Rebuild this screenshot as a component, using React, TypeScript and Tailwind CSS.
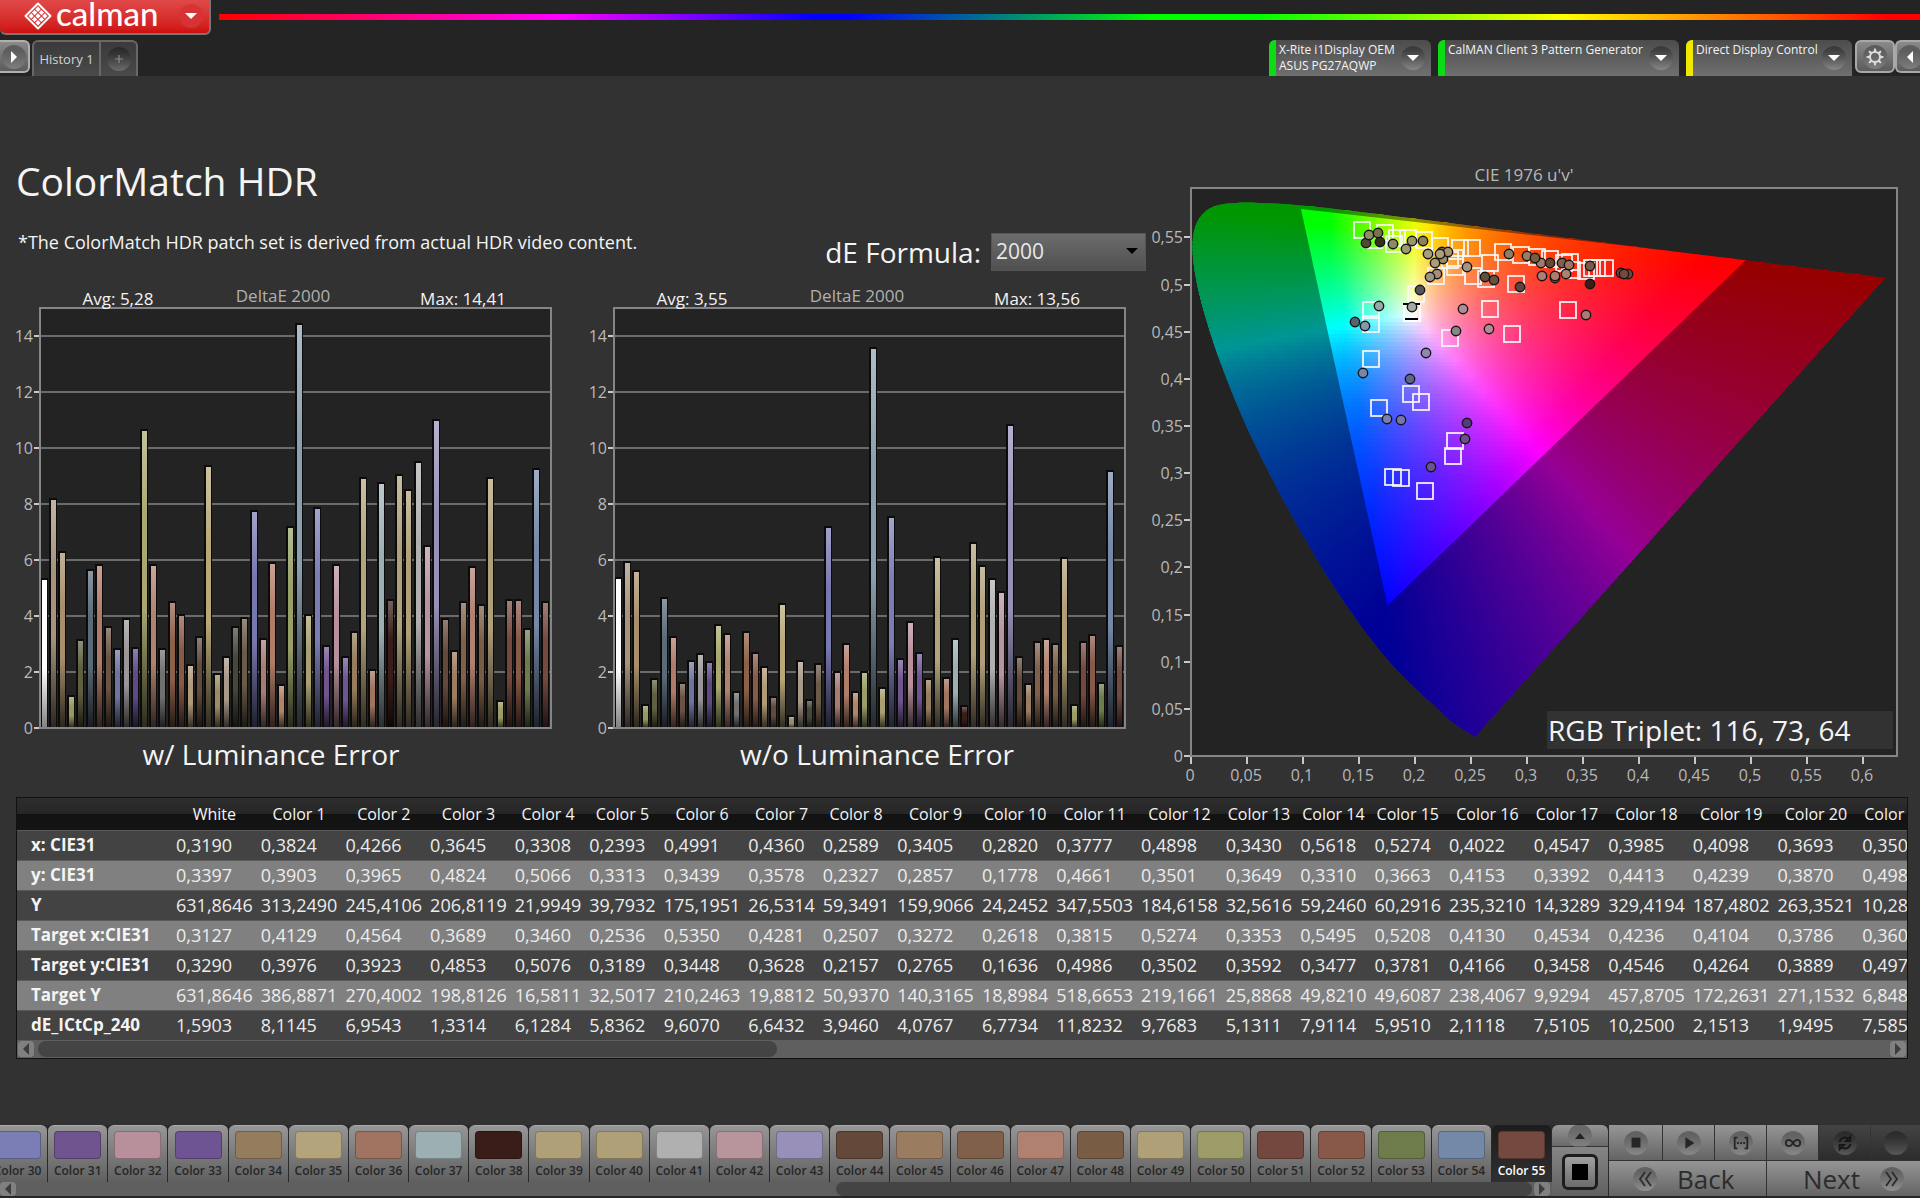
import React from "react";

const PALETTE = [
  "#ffffff", "#a8947c", "#a88f6c", "#9a9860", "#5f6040", "#5a6a78", "#b07a68", "#6a5344",
  "#6f74a0", "#9a9698", "#5f4a88", "#a8a870", "#b08270", "#707070", "#8f6048", "#8a5a48",
  "#b09a78", "#5f4a3c", "#b8a878", "#9a8c64", "#a89888", "#46463a", "#6a5a48", "#7878b0",
  "#a87c74", "#b07c68", "#b08468", "#98a068", "#8aa0b0", "#a8a070", "#7a7eb4", "#6f5490",
  "#b8909c", "#6f5494", "#947c5c", "#b4a47c", "#a07460", "#9cb0b4", "#3a1c18", "#b0a078",
  "#b0a078", "#b0b0b0", "#b8949c", "#9890b8", "#64483a", "#9a7c60", "#80604a", "#b08070",
  "#785c44", "#b0a078", "#9c9c68", "#74483e", "#885848", "#6e7c4c", "#7488a8", "#744940",
];

const WITH_LUMINANCE = [
  5.29, 8.14, 6.24, 1.12, 3.1, 5.62, 5.79, 3.58, 2.78, 3.85, 2.82, 10.62, 5.77, 2.78, 4.47, 4.0,
  2.2, 3.22, 9.33, 1.9, 2.5, 3.58, 3.89, 7.7, 3.15, 5.86, 1.49, 7.15, 14.39, 4.0, 7.81, 2.89,
  5.77, 2.5, 3.39, 8.89, 2.05, 8.72, 4.52, 9.0, 8.48, 9.46, 6.48, 10.95, 3.85, 2.72, 4.47, 5.7,
  4.34, 8.89, 0.93, 4.52, 4.52, 3.51, 9.21, 4.47,
];

const WITHOUT_LUMINANCE = [
  5.31, 5.9, 5.56, 0.79, 1.7, 4.62, 3.21, 1.57, 2.35, 2.59, 2.31, 3.66, 3.32, 1.24, 3.38, 2.65,
  2.16, 1.07, 4.39, 0.4, 2.36, 0.96, 2.26, 7.14, 1.98, 2.98, 1.24, 1.96, 13.55, 1.38, 7.49, 2.42,
  3.75, 2.65, 1.71, 6.08, 1.76, 3.15, 0.74, 6.57, 5.75, 5.29, 4.83, 10.79, 2.49, 1.54, 3.05, 3.15,
  2.95, 6.05, 0.79, 3.05, 3.27, 1.57, 9.15, 2.88,
];

const HEADINGS = ["White", ...Array.from({ length: 21 }, (_, i) => `Color ${i + 1}`)];

const TABLE: { label: string; values: string[] }[] = [
  { label: "x: CIE31", values: "0,3190 0,3824 0,4266 0,3645 0,3308 0,2393 0,4991 0,4360 0,2589 0,3405 0,2820 0,3777 0,4898 0,3430 0,5618 0,5274 0,4022 0,4547 0,3985 0,4098 0,3693 0,3501".split(" ") },
  { label: "y: CIE31", values: "0,3397 0,3903 0,3965 0,4824 0,5066 0,3313 0,3439 0,3578 0,2327 0,2857 0,1778 0,4661 0,3501 0,3649 0,3310 0,3663 0,4153 0,3392 0,4413 0,4239 0,3870 0,4982".split(" ") },
  { label: "Y", values: "631,8646 313,2490 245,4106 206,8119 21,9949 39,7932 175,1951 26,5314 59,3491 159,9066 24,2452 347,5503 184,6158 32,5616 59,2460 60,2916 235,3210 14,3289 329,4194 187,4802 263,3521 10,2841".split(" ") },
  { label: "Target x:CIE31", values: "0,3127 0,4129 0,4564 0,3689 0,3460 0,2536 0,5350 0,4281 0,2507 0,3272 0,2618 0,3815 0,5274 0,3353 0,5495 0,5208 0,4130 0,4534 0,4236 0,4104 0,3786 0,3602".split(" ") },
  { label: "Target y:CIE31", values: "0,3290 0,3976 0,3923 0,4853 0,5076 0,3189 0,3448 0,3628 0,2157 0,2765 0,1636 0,4986 0,3502 0,3592 0,3477 0,3781 0,4166 0,3458 0,4546 0,4264 0,3889 0,4971".split(" ") },
  { label: "Target Y", values: "631,8646 386,8871 270,4002 198,8126 16,5811 32,5017 210,2463 19,8812 50,9370 140,3165 18,8984 518,6653 219,1661 25,8868 49,8210 49,6087 238,4067 9,9294 457,8705 172,2631 271,1532 6,8482".split(" ") },
  { label: "dE_ICtCp_240", values: "1,5903 8,1145 6,9543 1,3314 6,1284 5,8362 9,6070 6,6432 3,9460 4,0767 6,7734 11,8232 9,7683 5,1311 7,9114 5,9510 2,1118 7,5105 10,2500 2,1513 1,9495 7,5852".split(" ") },
];

/* ---------- bar charts ---------- */

function BarChart({
  id, values, avg, max, caption, captionClass,
}: {
  id: string; values: number[]; avg: string; max: string; caption: string; captionClass: string;
}) {
  const base = 443;
  const unit = 28;
  return (
    <figure className="min-w-0">
      <svg viewBox="0 0 574 455" className="block w-full" fontSize={16} role="img" aria-label={caption}>
        <defs>
          {PALETTE.map((c, i) => (
            <linearGradient key={i} id={`${id}-${i}`} x1="0" y1="0" x2="0" y2="1">
              <stop offset="0" stopColor={mix(c, 255, 0.3)} />
              <stop offset="0.3" stopColor={c} />
              <stop offset="0.6" stopColor={c} />
              <stop offset="1" stopColor={mix(c, 0, i === 0 ? 0.5 : 0.75)} />
            </linearGradient>
          ))}
        </defs>
        <rect x="40" y="23" width="511" height="420" fill="#232323" />
        {[2, 4, 6, 8, 10, 12, 14].map((v) => (
          <rect key={v} x="40" y={base - v * unit - 1} width="511" height="2" fill="#6b6b6b" />
        ))}
        {[0, 2, 4, 6, 8, 10, 12, 14].map((v) => (
          <g key={v}>
            <rect x="34" y={base - v * unit - 1} width="6" height="2" fill="#c8c8c8" />
            <text x="33" y={base - v * unit + 6} textAnchor="end" fill="#b9b9b9">{v}</text>
          </g>
        ))}
        {values.map((v, i) => {
          const x = Math.round(44 + i * 9.11) - 3;
          const h = Math.round(v * unit);
          return (
            <g key={i}>
              <rect x={x - 1} y={base - h - 2} width="8" height={h + 2} fill="#0b0b0b" />
              <rect x={x + 1} y={base - h} width="5" height={h} fill={`url(#${id}-${i})`} />
            </g>
          );
        })}
        <rect x="40" y="23" width="511" height="420" fill="none" stroke="#858585" strokeWidth="2" />
        <text x="118" y="20" fontSize="17" textAnchor="middle" fill="#f4f4f4">{`Avg: ${avg}`}</text>
        <text x="283" y="17" fontSize="17" textAnchor="middle" fill="#b0b0b0">DeltaE 2000</text>
        <text x="463" y="20" fontSize="17" textAnchor="middle" fill="#f4f4f4">{`Max: ${max}`}</text>
      </svg>
      <figcaption className={captionClass}>{caption}</figcaption>
    </figure>
  );
}

function mix(hex: string, target: number, t: number) {
  const ch = [1, 3, 5].map((i) => parseInt(hex.slice(i, i + 2), 16));
  return `rgb(${ch.map((c) => Math.round(c + (target - c) * t)).join(",")})`;
}

/* ---------- CIE 1976 diagram ---------- */

const X0 = 1191, Y0 = 756, SX = 1119.5, SY = 943;
const px = (u: number) => X0 + u * SX;
const py = (v: number) => Y0 - v * SY;

const LOCUS_XY = [
  [0.173, 0.0062], [0.1644, 0.0109], [0.1566, 0.0177], [0.151, 0.0227], [0.144, 0.0297],
  [0.1355, 0.0399], [0.1241, 0.0578], [0.1096, 0.0868], [0.0913, 0.1327], [0.0687, 0.2007], [0.0454, 0.295],
  [0.0235, 0.4127], [0.0082, 0.5384], [0.0039, 0.6548], [0.0139, 0.7502], [0.0389, 0.812], [0.0743, 0.8338],
  [0.1142, 0.8262], [0.1547, 0.8059], [0.2296, 0.7543], [0.3016, 0.6923], [0.3731, 0.6245], [0.4441, 0.5547],
  [0.5125, 0.4866], [0.5752, 0.4242], [0.627, 0.3725], [0.6915, 0.3083], [0.7334, 0.2666],
];

const LOCUS_PTS = LOCUS_XY.map(([x, y]) => {
  const d = -2 * x + 12 * y + 3;
  return [px((4 * x) / d), py((9 * y) / d)];
});

function smooth(p: number[][]) {
  let d = `M${p[0][0].toFixed(1)} ${p[0][1].toFixed(1)}`;
  for (let i = 0; i < p.length - 1; i++) {
    const a = p[Math.max(i - 1, 0)], b = p[i], c = p[i + 1], e = p[Math.min(i + 2, p.length - 1)];
    d += `C${[b[0] + (c[0] - a[0]) / 6, b[1] + (c[1] - a[1]) / 6, c[0] - (e[0] - b[0]) / 6, c[1] - (e[1] - b[1]) / 6, c[0], c[1]]
      .map((n) => n.toFixed(1))
      .join(" ")}`;
  }
  return d + "Z";
}
const LOCUS = smooth(LOCUS_PTS);
const TRIANGLE = "M1301 209L1746.500 259.500L1387.500 605.500Z";

function chroma(u: number, v: number) {
  const vv = Math.max(v, 0.005);
  const X = (9 * u) / (4 * vv);
  const Z = (12 - 3 * u - 20 * vv) / (4 * vv);
  const lin = [
    3.2406 * X - 1.5372 - 0.4986 * Z,
    -0.9689 * X + 1.8758 + 0.0415 * Z,
    0.0557 * X - 0.204 + 1.057 * Z,
  ].map((c) => Math.max(c, 0));
  const m = Math.max(...lin, 0.0001);
  const [r, g, b] = lin.map((c) => Math.round(255 * Math.pow(c / m, 1 / 1.15)));
  return `rgb(${r},${g},${b})`;
}

const ROW = 4;
const ROWS = Array.from({ length: 137 }, (_, i) => 198 + i * ROW);
const STOPS = Array.from({ length: 51 }, (_, i) => i / 50);

const SQUARES = [
  [1362, 230], [1385, 233], [1374, 240], [1394, 244], [1397, 238], [1408, 238], [1424, 240], [1440, 246],
  [1460, 248], [1472, 248], [1455, 258], [1450, 260], [1455, 267], [1436, 276], [1473, 276], [1486, 279],
  [1490, 263], [1503, 252], [1521, 255], [1537, 257], [1550, 259], [1564, 263], [1570, 262], [1572, 270],
  [1586, 271], [1592, 268], [1597, 268], [1605, 268], [1516, 284], [1416, 294], [1371, 310], [1371, 324],
  [1371, 359], [1411, 394], [1421, 402], [1379, 408], [1455, 441], [1453, 456], [1393, 477], [1401, 478],
  [1425, 491], [1450, 338], [1490, 309], [1512, 334], [1568, 310],
];

const DOTS: [number, number, string][] = [
  [1366, 243, "#4e4a34"], [1369, 235, "#8f8d68"], [1380, 242, "#34301e"], [1378, 233, "#75744a"],
  [1393, 244, "#8f8a64"], [1406, 249, "#a09a70"], [1412, 241, "#99966a"], [1423, 241, "#8f8060"],
  [1428, 254, "#a8a07a"], [1443, 259, "#9a8a64"], [1442, 252, "#8a7a58"], [1435, 263, "#b09a7a"],
  [1448, 252, "#a8906c"], [1440, 254, "#b0a078"], [1437, 274, "#a89078"], [1430, 277, "#a09488"],
  [1467, 267, "#a8947c"], [1509, 254, "#947c5c"], [1527, 256, "#9a7c60"], [1541, 263, "#a07c68"],
  [1535, 258, "#785c44"], [1550, 263, "#64483a"], [1562, 263, "#80604a"], [1569, 265, "#a07460"],
  [1485, 277, "#5c5040"], [1494, 280, "#66523e"], [1520, 287, "#5f443a"], [1420, 290, "#555555"],
  [1412, 307, "#a8a8a8"], [1379, 306, "#96a8ac"], [1355, 322, "#55646e"], [1365, 326, "#8498a8"],
  [1463, 309, "#b08c98"], [1489, 329, "#b08c94"], [1456, 331, "#8a8688"], [1426, 353, "#9088b0"],
  [1363, 373, "#7488a8"], [1410, 379, "#5f6488"], [1387, 419, "#7a7eb0"], [1401, 420, "#7a74ac"],
  [1467, 423, "#543c78"], [1465, 439, "#6c5088"], [1431, 467, "#6a5490"],
  [1542, 276, "#b07c74"], [1555, 278, "#a06c5c"], [1555, 276, "#b07c6c"], [1566, 274, "#b08070"],
  [1590, 266, "#7a5a48"], [1590, 284, "#3a1c18"], [1586, 315, "#a87c74"],
  [1621, 273, "#74483e"], [1628, 274, "#744940"], [1624, 274, "#744940"],
];

const fmt = (n: number) => String(Number(n.toFixed(2))).replace(".", ",");

function CieChart() {
  const x1 = 1191, x2 = 1887;
  return (
    <svg viewBox="1148 160 772 630" className="block w-full" fontSize={16} role="img" aria-label="CIE 1976 u'v' diagram">
      <defs>
        <clipPath id="locus"><path d={LOCUS} /></clipPath>
        {ROWS.map((y, i) => (
          <linearGradient key={y} id={`cie${i}`} gradientUnits="userSpaceOnUse" x1={x1} x2={x2} y1="0" y2="0">
            {STOPS.map((s) => (
              <stop key={s} offset={s} stopColor={chroma((s * (x2 - x1)) / SX, (Y0 - y - 2) / SY)} />
            ))}
          </linearGradient>
        ))}
      </defs>
      <text x="1524" y="181" fontSize="17" textAnchor="middle" fill="#b8b8b8">CIE 1976 u'v'</text>
      <rect x="1191" y="188" width="706" height="568" fill="#232323" />
      <g clipPath="url(#locus)">
        {ROWS.map((y, i) => (
          <rect key={y} x={x1} y={y} width={x2 - x1} height={ROW + 1} fill={`url(#cie${i})`} />
        ))}
        <path d={`M1180 180H1900V760H1180Z${TRIANGLE}`} fillRule="evenodd" fill="#000" fillOpacity="0.41" />
      </g>
      <rect x="1191" y="188" width="706" height="568" fill="none" stroke="#858585" strokeWidth="2" />
      {Array.from({ length: 12 }, (_, i) => i * 0.05).map((v) => (
        <g key={v}>
          <rect x="1184" y={Math.round(py(v)) - 1} width="6" height="2" fill="#c8c8c8" />
          <text x="1183" y={Math.round(py(v)) + 6} textAnchor="end" fill="#b8b8b8">{fmt(v)}</text>
        </g>
      ))}
      {Array.from({ length: 13 }, (_, i) => i * 0.05).map((u) => (
        <g key={u}>
          <rect x={Math.round(px(u)) - 1} y="757" width="2" height="7" fill="#c8c8c8" />
          <text x={Math.round(px(u)) - 1} y="781" textAnchor="middle" fill="#b8b8b8">{fmt(u)}</text>
        </g>
      ))}
      {SQUARES.map(([x, y], i) => (
        <rect key={i} x={x - 8} y={y - 8} width="16" height="16" fill="none" stroke="#fafafa" strokeWidth="1.700" />
      ))}
      <rect x="1404" y="305" width="16" height="16" fill="none" stroke="#fff" strokeWidth="2" />
      <path d="M1403 304H1420M1405 319H1418" stroke="#000" strokeWidth="2" />
      {DOTS.map(([x, y, c], i) => (
        <circle key={i} cx={x} cy={y} r="4.700" fill={c} stroke="#151515" strokeWidth="1.400" />
      ))}
      <rect x="1547" y="711" width="346" height="38" fill="#323232" />
      <text x="1548" y="741" fontSize="28" fill="#f4f4f4">RGB Triplet: 116, 73, 64</text>
    </svg>
  );
}

/* ---------- small controls ---------- */

function Round({ children, className = "" }: { children?: React.ReactNode; className?: string }) {
  return (
    <span className={`flex size-6 shrink-0 items-center justify-center rounded-full bg-linear-to-b from-black/30 to-white/20 ${className}`}>
      {children}
    </span>
  );
}

function Tri({ d, className = "text-white" }: { d: string; className?: string }) {
  return (
    <svg viewBox="0 0 12 12" className={`size-3 ${className}`} aria-hidden="true">
      <path d={d} fill="currentColor" />
    </svg>
  );
}
const DOWN = "M0 3H12L6 9Z", RIGHT = "M3 0L9 6L3 12Z", LEFT = "M9 0L3 6L9 12Z", UP = "M1 9H11L6 3Z";

function Logo() {
  return (
    <svg viewBox="0 0 28 28" className="h-7 w-7" aria-hidden="true">
      <path d="M14 1.500L26.500 14L14 26.500L1.500 14Z" fill="none" stroke="#fff" strokeWidth="2" strokeLinejoin="round" />
      {[-1, 0, 1].map((a) =>
        [-1, 0, 1].map((b) => {
          const cx = 14 + (a - b) * 3.4, cy = 14 + (a + b) * 3.4;
          return <path key={`${a}${b}`} d={`M${cx} ${cy - 2.7}l2.700 2.700l-2.700 2.700l-2.700 -2.700Z`} fill="#fff" />;
        })
      )}
    </svg>
  );
}

function Device({ color, lines, width }: { color: string; lines: string[]; width: string }) {
  return (
    <button className={`flex h-9 items-center overflow-hidden rounded-t-md bg-linear-to-b from-[#4c4c4c] to-[#707070] text-left ${width}`}>
      <span className={`h-full w-[7px] shrink-0 ${color}`} />
      <span className="h-full flex-1 pt-0.5 pl-[3px] text-[12px] leading-4 whitespace-nowrap text-[#f4f4f4]">
        {lines.map((l) => <span key={l} className="block">{l}</span>)}
      </span>
      <Round className="mr-1.5"><Tri d={DOWN} /></Round>
    </button>
  );
}

function Thumb({ dir, label }: { dir: string; label: string }) {
  return (
    <button aria-label={label} className="flex h-full w-4 shrink-0 items-center justify-center rounded-sm bg-[#808080]">
      <Tri d={dir} className="text-[#3c3c3c]" />
    </button>
  );
}

const TRANSPORT = [
  { name: "Stop", icon: <rect x="5" y="4" width="10" height="11" fill="currentColor" />, on: true },
  { name: "Play", icon: <path d="M6 3.500L16 10L6 16.500Z" fill="currentColor" />, on: true },
  { name: "Read series", icon: <path d="M6 4H3V16H6M14 4H17V16H14M5.500 10H7.500M9 10H11M12.500 10H14.500" fill="none" stroke="currentColor" strokeWidth="2" />, on: true },
  { name: "Read continuous", icon: <path d="M10 10C8.500 7.500 7 6.500 5.500 6.500a3.500 3.500 0 0 0 0 7C7 13.500 8.500 12.500 10 10C11.500 7.500 13 6.500 14.500 6.500a3.500 3.500 0 0 1 0 7C13 13.500 11.500 12.500 10 10Z" fill="none" stroke="currentColor" strokeWidth="2" />, on: true },
  { name: "Refresh", icon: <path d="M4 9a6 6 0 0 1 10-3.500M16 3V8H11ZM16 11a6 6 0 0 1-10 3.500M4 17V12H9Z" fill="none" stroke="currentColor" strokeWidth="2" />, on: false },
  { name: "Record", icon: null, on: false },
];

export default function App() {
  return (
    <div className="flex min-h-screen flex-col overflow-hidden bg-[#323232] font-['Open_Sans','Noto_Sans',sans-serif] text-[#f4f4f4]">
      <header className="bg-[#242424]">
        <div className="flex h-[35px] items-start gap-2">
          <button className="flex h-[35px] w-[211px] shrink-0 items-center rounded-b-md border-r-2 border-b-2 border-[#777] bg-linear-to-b from-[#e04848] to-[#cf0e0e] pb-0.5 pl-6">
            <Logo />
            <span className="ml-1 flex-1 pb-1.5 text-left font-['Lato',sans-serif] text-[33px] leading-10 font-medium text-white">calman</span>
            <Round className="mr-1.5 bg-none bg-[#d63434]"><Tri d={DOWN} /></Round>
          </button>
          <div className="mt-3.5 h-1.5 flex-1 bg-[linear-gradient(90deg,#ff0000_0%,#ff00ff_20%,#0000ff_35%,#0000ff_37%,#00ff00_55%,#00ff00_61%,#ffff00_79%,#ff0000_98%)]" />
        </div>
        <div className="flex h-[41px] items-start pt-[5px]">
          <button aria-label="Expand left panel" className="flex h-[33px] w-[30px] items-center justify-center rounded-r-md border-2 border-l-0 border-[#b0b0b0] bg-linear-to-b from-[#8a8a8a] to-[#5c5c5c]">
            <Round><Tri d={RIGHT} /></Round>
          </button>
          <div className="ml-0.5 flex h-9 rounded-t-md border-2 border-b-0 border-[#686868] bg-linear-to-b from-[#3a3a3a] to-[#4a4a4a]">
            <button className="w-[67px] border-r-2 border-[#686868] text-center text-[13px] leading-6 whitespace-nowrap text-[#d4d4d4]">History 1</button>
            <button aria-label="Add history" className="flex w-[35px] items-center justify-center text-[#8a8a8a]">
              <Round className="from-[#333] to-[#444]">
                <svg viewBox="0 0 10 10" className="size-2.5"><path d="M5 1V9M1 5H9" stroke="currentColor" strokeWidth="1.200" /></svg>
              </Round>
            </button>
          </div>
          <div className="ml-auto flex shrink-0">
            <Device color="bg-[#0cdc14]" lines={["X-Rite i1Display OEM", "ASUS PG27AQWP"]} width="w-[162px]" />
            <span className="w-[7px]" />
            <Device color="bg-[#0cdc14]" lines={["CalMAN Client 3 Pattern Generator"]} width="w-[241px]" />
            <span className="w-[7px]" />
            <Device color="bg-[#f0e800]" lines={["Direct Display Control"]} width="w-[166px]" />
            <button aria-label="Settings" className="ml-[3px] flex h-[33px] w-10 items-center justify-center rounded-md border-2 border-[#a8a8a8] bg-linear-to-b from-[#8a8a8a] to-[#5c5c5c]">
              <Round>
                <svg viewBox="0 0 20 20" className="size-5 text-[#dcdcdc]" aria-hidden="true">
                  <circle cx="10" cy="10" r="5" fill="none" stroke="currentColor" strokeWidth="2" />
                  {[0, 45, 90, 135, 180, 225, 270, 315].map((a) => (
                    <path key={a} d="M8.500 5L9.200 1.500H10.800L11.500 5Z" fill="currentColor" transform={`rotate(${a} 10 10)`} />
                  ))}
                </svg>
              </Round>
            </button>
            <button aria-label="Expand right panel" className="flex h-[33px] w-[25px] items-center justify-end rounded-l-md border-2 border-r-0 border-[#a8a8a8] bg-linear-to-b from-[#8a8a8a] to-[#5c5c5c]">
              <Round className="-mr-0.5"><Tri d={LEFT} /></Round>
            </button>
          </div>
        </div>
      </header>

      <main className="flex-1">
        <div className="grid grid-cols-[1148fr_772fr]">
          <section className="min-w-0 pt-[77px]">
            <h1 className="pl-4 text-[39px] leading-[56px]">ColorMatch HDR</h1>
            <div className="mt-6 flex h-[38px] items-center pl-[18px]">
              <p className="pb-5 text-[18px] leading-6 whitespace-nowrap">*The ColorMatch HDR patch set is derived from actual HDR video content.</p>
              <label htmlFor="formula" className="ml-auto text-[28px] leading-9">dE Formula:</label>
              <div className="relative mr-0.5 ml-2.5 h-[38px] w-[155px]">
                <select id="formula" defaultValue="2000" className="h-full w-full appearance-none border border-[#555] bg-linear-to-b from-[#6c6c6c] to-[#505050] pl-1 text-[21px] text-[#e8e8e8]">
                  <option>2000</option>
                  <option>1976</option>
                </select>
                <span className="pointer-events-none absolute top-3 right-2"><Tri d={DOWN} className="text-black" /></span>
              </div>
            </div>
            <div className="mt-3.5 grid grid-cols-2">
              <BarChart id="lum" values={WITH_LUMINANCE} avg="5,28" max="14,41" caption="w/ Luminance Error" captionClass="pr-8 text-center text-[28px] leading-7" />
              <BarChart id="nolum" values={WITHOUT_LUMINANCE} avg="3,55" max="13,56" caption="w/o Luminance Error" captionClass="pl-8 text-center text-[28px] leading-7" />
            </div>
          </section>
          <section className="min-w-0 pt-[84px]">
            <CieChart />
          </section>
        </div>

        <section className="mt-[7px] mr-3 ml-4 border border-[#111] bg-[#454545]">
          <div className="overflow-hidden">
            <table className="border-collapse text-[18px] leading-[22px] whitespace-nowrap">
              <thead>
                <tr className="h-8 bg-[linear-gradient(180deg,#2e2e2e_0%,#262626_50%,#121212_51%,#141414_100%)]">
                  <th className="min-w-[155px]" aria-label="Measurement" />
                  {HEADINGS.map((h) => <th key={h} scope="col" className="p-0 text-center text-[16px] font-normal">{h}</th>)}
                </tr>
              </thead>
              <tbody>
                {TABLE.map((row, i) => (
                  <tr key={row.label} className={i % 2 ? "h-[30px] border-t border-[#5a5a5a] bg-[#808080]" : "h-[30px] border-t border-[#5a5a5a] bg-[#434343]"}>
                    <th scope="row" className="p-0 pl-3.5 text-left text-[17px] font-bold">{row.label}</th>
                    {row.values.map((v, j) => <td key={j} className="px-1 py-0 text-[18px] text-[#ececec]">{v}</td>)}
                  </tr>
                ))}
              </tbody>
            </table>
          </div>
          <div className="flex h-[18px] bg-[#5f5f5f] p-px">
            <Thumb dir={LEFT} label="Scroll table left" />
            <div className="flex-1 px-1"><div className="h-full w-[40%] rounded-lg bg-[#444]" /></div>
            <Thumb dir={RIGHT} label="Scroll table right" />
          </div>
        </section>
      </main>

      <footer className="flex h-[73px] border-b-2 border-[#262626] bg-[#2a2a2a]">
        <div className="flex min-w-0 flex-1 flex-col">
          <div className="flex h-[57px] justify-end overflow-hidden">
            <div className="flex w-[1564px] shrink-0">
              {PALETTE.slice(30).map((c, i) => {
                const n = i + 30;
                const active = n === 55;
                return (
                  <button
                    key={n}
                    className={
                      active
                        ? "mr-px flex flex-1 flex-col items-center rounded-t-md bg-linear-to-b from-[#1c1c1c] to-[#303030] text-white"
                        : "mr-px flex flex-1 flex-col items-center rounded-t-md border-t border-[#aaa] bg-linear-to-b from-[#969696] to-[#606060] text-[#262626]"
                    }
                  >
                    <span className={active ? "mt-1.5 h-7 w-[47px] rounded-sm border border-black/25" : "mt-[5px] h-7 w-[47px] rounded-sm border border-black/25"} style={{ backgroundColor: c }} />
                    <span className="mt-1 text-[12px] leading-4 font-semibold whitespace-nowrap">Color {n}</span>
                  </button>
                );
              })}
            </div>
          </div>
          <div className="flex h-3.5 bg-[#5f5f5f] pr-0.5">
            <Thumb dir={LEFT} label="Scroll patches left" />
            <div className="flex flex-1 justify-end px-0.5"><div className="h-full w-[46%] rounded-lg bg-[#444]" /></div>
            <Thumb dir={RIGHT} label="Scroll patches right" />
          </div>
        </div>
        <div className="flex w-14 shrink-0 flex-col gap-px rounded-t-md bg-[#333]">
          <button aria-label="Collapse" className="flex h-[21px] items-center justify-center rounded-t-md bg-linear-to-b from-[#969696] to-[#6a6a6a]">
            <Round className="size-5"><Tri d={UP} className="text-[#222]" /></Round>
          </button>
          <button aria-label="Stop measurement" className="flex flex-1 items-center justify-center bg-linear-to-b from-[#868686] to-[#606060]">
            <span className="flex size-9 items-center justify-center rounded-md border-3 border-[#1c1c1c] bg-linear-to-b from-[#a0a0a0] to-[#6c6c6c]">
              <span className="size-4 bg-black" />
            </span>
          </button>
        </div>
        <div className="ml-px flex w-[311px] shrink-0 flex-col gap-px bg-[#333]">
          <div className="grid h-[35px] grid-cols-[53px_51px_51px_51px_51px_1fr] gap-px">
            {TRANSPORT.map((t) => (
              <button
                key={t.name}
                aria-label={t.name}
                className={
                  t.on
                    ? "flex items-center justify-center bg-linear-to-b from-[#969696] to-[#646464]"
                    : "flex items-center justify-center bg-linear-to-b from-[#444] to-[#2c2c2c]"
                }
              >
                <Round>
                  <svg viewBox="0 0 20 20" className={t.on ? "size-[18px] text-[#262626]" : "size-[18px] text-[#161616]"} aria-hidden="true">{t.icon}</svg>
                </Round>
              </button>
            ))}
          </div>
          <div className="grid flex-1 grid-cols-[157px_1fr] gap-px text-[26px] leading-8 font-medium text-[#2c2c2c]">
            <button className="flex items-center gap-5 bg-linear-to-b from-[#969696] to-[#646464] pl-6">
              <Round className="from-black/10 to-white/25">
                <svg viewBox="0 0 20 20" className="size-5" aria-hidden="true"><path d="M10 3L5 10L10 17M16 3L11 10L16 17" fill="none" stroke="currentColor" strokeWidth="1.800" /></svg>
              </Round>
              Back
            </button>
            <button className="flex items-center justify-end gap-5 bg-linear-to-b from-[#969696] to-[#646464] pr-4">
              Next
              <Round className="from-black/10 to-white/25">
                <svg viewBox="0 0 20 20" className="size-5" aria-hidden="true"><path d="M4 3L9 10L4 17M10 3L15 10L10 17" fill="none" stroke="currentColor" strokeWidth="1.800" /></svg>
              </Round>
            </button>
          </div>
        </div>
      </footer>
    </div>
  );
}
